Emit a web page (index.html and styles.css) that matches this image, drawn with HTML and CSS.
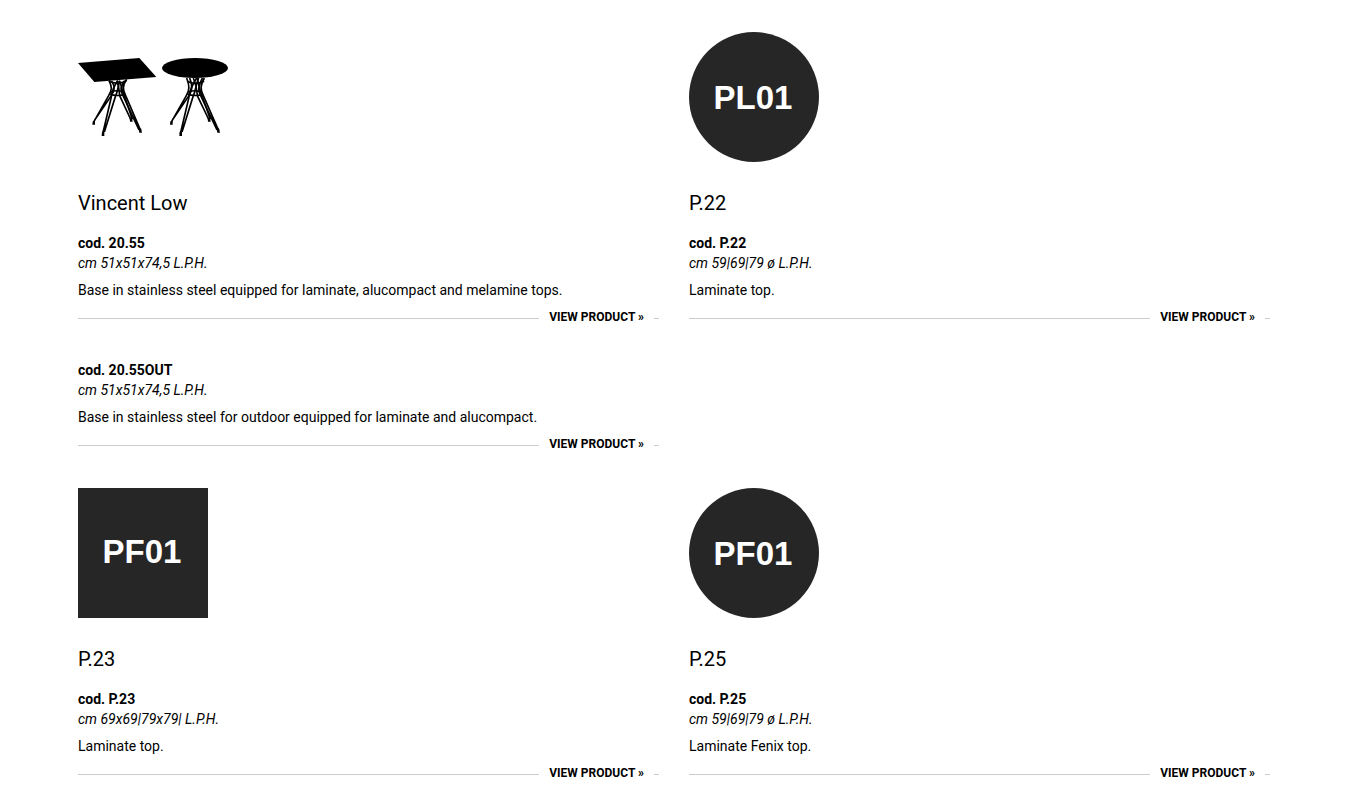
FILE: index.html
```html
<!DOCTYPE html>
<html lang="en">
<head>
    <meta charset="UTF-8">
    <meta name="viewport" content="width=device-width, initial-scale=1.0">
    <title>Vincent Low</title>
    <link rel="stylesheet" href="styles.css">
</head>
<body>
    <main class="product-grid">
        <section class="product">
            <svg class="product-image" width="150" height="130" viewBox="24 -54 450 390" role="img" aria-label="Vincent Low tables">
                <!-- Square table -->
                <path d="M24 39L208 24L259 81L73 96Z"/>
                <g class="table-frame">
                    <path d="M117 92C127 112 126 120 116 137L70 218M126 94C136 112 133 122 124 137L74 210"/>
                    <path d="M170 88C157 107 158 119 167 137L212 242M164 92C150 112 151 122 159 137L207 240"/>
                    <path d="M145 92C133 105 126 120 123 145L98 252M150 92C142 112 145 120 137 137L103 246"/>
                    <path d="M140 92C148 110 147 120 149 137L183 210M150 96C156 112 156 124 163 137L187 208"/>
                    <path d="M118 94C132 102 158 101 170 91M122 126C134 121 154 121 162 127M120 132C132 138 156 138 165 132"/>
                </g>
                <path d="M68 215L75 211V224H67ZM96 245L103 243V258H95ZM179 205L186 202L188 215H180ZM206 237L213 235L216 248H208Z"/>
                <!-- Round table -->
                <ellipse cx="375" cy="54" rx="99" ry="30"/>
                <g class="table-frame">
                    <path d="M350 84C359 108 359 120 349 137L303 218M359 84C369 110 366 122 357 137L307 210"/>
                    <path d="M403 84C390 107 391 119 400 137L446 242M397 84C383 112 384 122 392 137L441 240"/>
                    <path d="M380 84C366 105 359 120 356 145L331 252M386 84C375 112 378 120 370 137L336 246"/>
                    <path d="M370 84C381 110 380 120 382 137L417 210M381 84C389 112 389 124 396 137L421 208"/>
                    <path d="M352 94C365 102 391 102 402 93M355 126C367 121 387 121 395 127M353 132C365 138 389 138 398 132"/>
                </g>
                <path d="M301 215L308 211V224H300ZM329 245L336 243V258H328ZM413 205L420 202L422 215H414ZM440 237L447 235L450 248H442Z"/>
            </svg>
            <h2>Vincent Low</h2>
            <article class="variant">
                <h3>cod. 20.55</h3>
                <em>cm 51x51x74,5 L.P.H.</em>
                <p>Base in stainless steel equipped for laminate, alucompact and melamine tops.</p>
                <div class="view-product"><a href="#">VIEW PRODUCT »</a></div>
            </article>
            <article class="variant">
                <h3>cod. 20.55OUT</h3>
                <em>cm 51x51x74,5 L.P.H.</em>
                <p>Base in stainless steel for outdoor equipped for laminate and alucompact.</p>
                <div class="view-product"><a href="#">VIEW PRODUCT »</a></div>
            </article>
        </section>

        <section class="product">
            <svg class="product-image" width="130" height="130" viewBox="0 0 130 130">
                <circle class="swatch" cx="65" cy="65" r="65"/>
                <text class="swatch-code" x="64" y="77">PL01</text>
            </svg>
            <h2>P.22</h2>
            <article class="variant">
                <h3>cod. P.22</h3>
                <em>cm 59|69|79 ø L.P.H.</em>
                <p>Laminate top.</p>
                <div class="view-product"><a href="#">VIEW PRODUCT »</a></div>
            </article>
        </section>

        <section class="product">
            <svg class="product-image" width="130" height="130" viewBox="0 0 130 130">
                <rect class="swatch" width="130" height="130"/>
                <text class="swatch-code" x="64" y="75">PF01</text>
            </svg>
            <h2>P.23</h2>
            <article class="variant">
                <h3>cod. P.23</h3>
                <em>cm 69x69|79x79| L.P.H.</em>
                <p>Laminate top.</p>
                <div class="view-product"><a href="#">VIEW PRODUCT »</a></div>
            </article>
        </section>

        <section class="product">
            <svg class="product-image" width="130" height="130" viewBox="0 0 130 130">
                <circle class="swatch" cx="65" cy="65" r="65"/>
                <text class="swatch-code" x="64" y="77">PF01</text>
            </svg>
            <h2>P.25</h2>
            <article class="variant">
                <h3>cod. P.25</h3>
                <em>cm 59|69|79 ø L.P.H.</em>
                <p>Laminate Fenix top.</p>
                <div class="view-product"><a href="#">VIEW PRODUCT »</a></div>
            </article>
        </section>
    </main>
</body>
</html>
```
FILE: styles.css
```css
/* General Styles */
body {
    margin: 0;
    background: #fff;
    color: #000;
    font-family: Roboto, sans-serif;
    font-size: 14px;
    line-height: 20px;
}

/* Product Grid */
.product-grid {
    display: grid;
    grid-template-columns: 1fr 1fr;
    gap: 34px 30px;
    padding: 32px 81px 0 78px;
}

.product-image {
    display: block;
    margin-bottom: 27px;
}

.product h2 {
    margin: 0 0 16px;
    font-size: 20px;
    font-weight: 400;
    line-height: 28px;
}

/* Drawings */
.table-frame {
    fill: none;
    stroke: #000;
    stroke-width: 5;
}

.swatch {
    fill: #262626;
}

.swatch-code {
    fill: #fff;
    font-family: "Liberation Sans", Arial, sans-serif;
    font-size: 33px;
    font-weight: 700;
    text-anchor: middle;
}

/* Variants */
.variant + .variant {
    margin-top: 33px;
}

.variant h3 {
    margin: 0;
    font-size: 14px;
    font-weight: 700;
    line-height: 20px;
}

.variant em {
    display: block;
}

.variant p {
    margin: 7px 0;
}

/* Link with a rule on both sides */
.view-product {
    display: flex;
    gap: 10px;
}

.view-product::before,
.view-product::after {
    content: "";
    height: 1px;
    margin-top: 11px;
    background: #ccc;
}

.view-product::before {
    flex: 1;
}

.view-product::after {
    width: 5px;
}

.view-product a {
    color: #000;
    font-size: 12px;
    font-weight: 700;
    text-decoration: none;
}

.view-product a:hover {
    text-decoration: underline;
}
```
